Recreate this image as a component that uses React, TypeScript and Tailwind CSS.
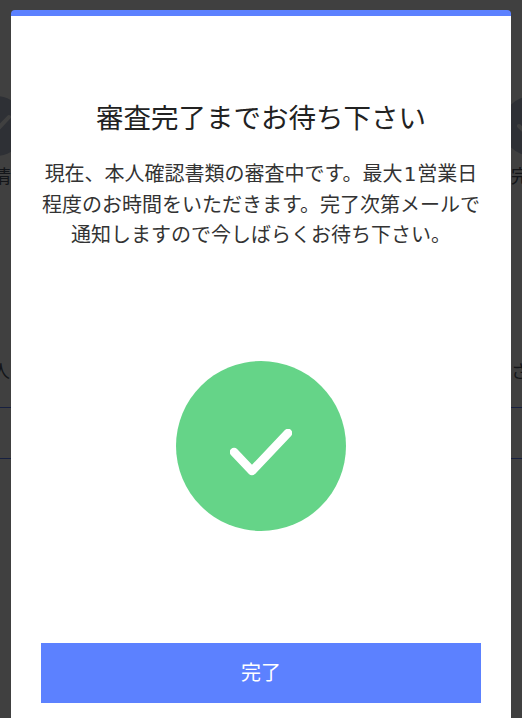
import React from 'react'

const FONT = "font-['Liberation_Sans','Noto_Sans_CJK_JP',sans-serif]"

const StepCircle: React.FC<{ className: string }> = ({ className }) => (
  <div className={`flex h-[60px] w-[60px] items-center justify-center rounded-full bg-[#b8c0d4] ${className}`}>
    <svg width="30" height="24" viewBox="0 0 30 24" fill="none">
      <path d="M2 12 L11 21 L28 3" stroke="white" strokeWidth="4" strokeLinecap="round" strokeLinejoin="round" />
    </svg>
  </div>
)

const BackgroundPage: React.FC = () => {
  return (
    <div className="h-[718px] overflow-hidden bg-white text-[#4b5563]">
      <div className="flex justify-between pt-[96px]">
        <StepCircle className="ml-[-34px]" />
        <StepCircle className="mr-[-40px]" />
      </div>
      <div className="mt-[8px] flex justify-between text-[18px] leading-[26px]">
        <span className="ml-[-7px]">情</span>
        <span className="mr-[-7px]">完</span>
      </div>
      <div className="mt-[169px] flex justify-between text-[18px] leading-[26px]">
        <span className="ml-[-8px]">人</span>
        <span className="mr-[-7px]">さ</span>
      </div>
      <div className="mt-[22px] h-px bg-[#5c81ff]" />
      <div className="mt-[50px] h-px bg-[#5c81ff]" />
    </div>
  )
}

export default function App() {
  return (
    <div className={`relative h-[718px] overflow-hidden ${FONT}`}>
      <BackgroundPage />
      <div className="absolute inset-0 flex justify-center bg-black/75 pt-[10px]">
        <div className="flex h-[760px] w-[500px] flex-col items-center rounded-t-[4px] border-t-[6px] border-[#5c81ff] bg-white px-[30px]">
          <h1 className="mt-[86px] text-[27.5px] leading-[34px] font-normal text-[#222]">審査完了までお待ち下さい</h1>
          <p className="mt-[23px] text-center text-[20px] leading-[30.5px] text-[#333]">
            現在、本人確認書類の審査中です。最大<span className="mx-px font-['DejaVu_Sans']">1</span>営業日程度のお時間をいただきます。完了次第メールで通知しますので今しばらくお待ち下さい。
          </p>
          <div className="mt-[110px] flex h-[170px] w-[170px] shrink-0 items-center justify-center rounded-full bg-[#65d488]">
            <svg width="62" height="48" viewBox="0 0 62 48" fill="none" className="mt-[14px]">
              <path d="M4 23 L22 42 L58 4" stroke="white" strokeWidth="8.5" strokeLinecap="round" strokeLinejoin="round" />
            </svg>
          </div>
          <button className="mt-[112px] h-[60px] w-[440px] shrink-0 bg-[#5c81ff] text-[20px] text-white">完了</button>
        </div>
      </div>
    </div>
  )
}
